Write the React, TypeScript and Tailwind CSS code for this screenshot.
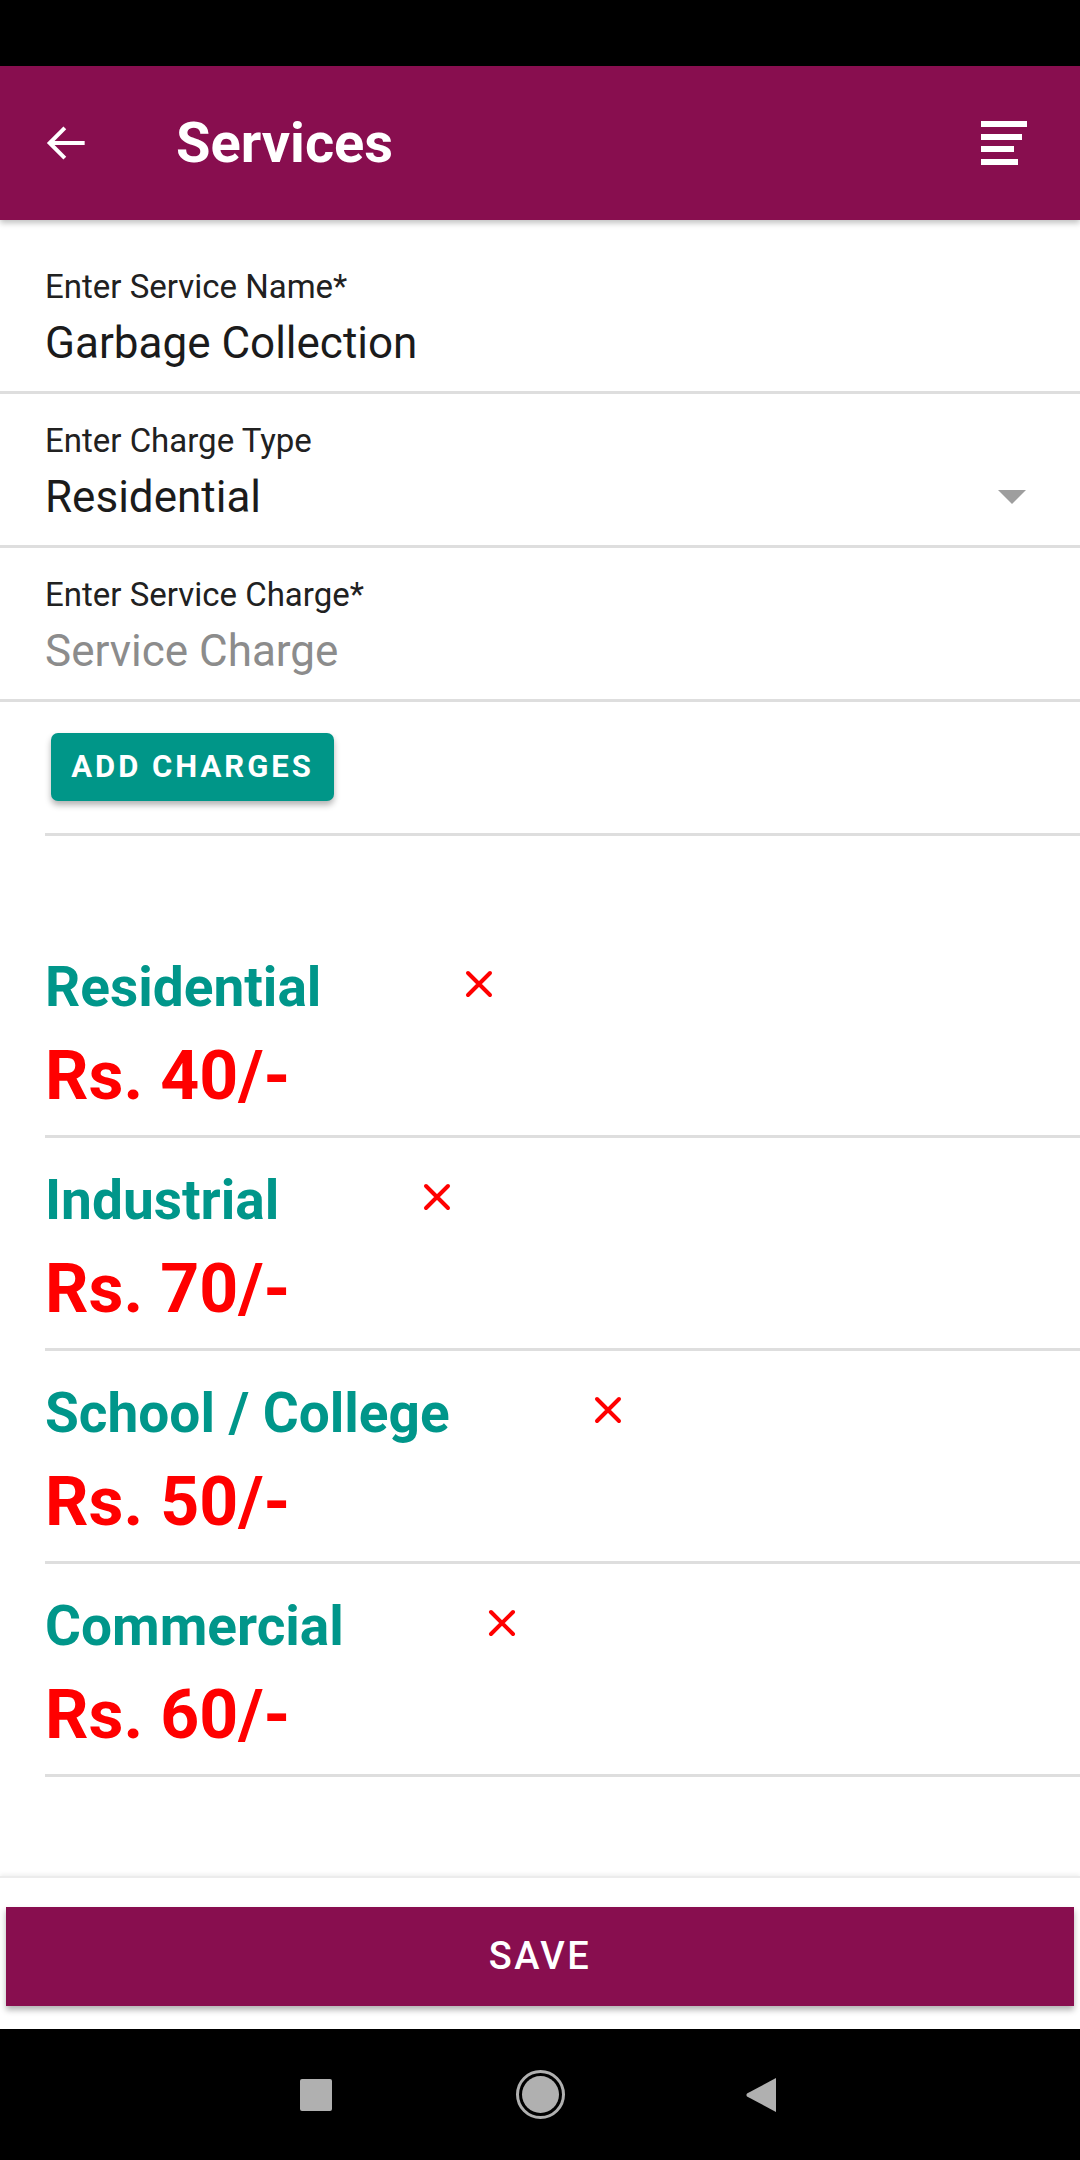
import React from "react"

const charges = [
  { type: "Residential", amount: 40 },
  { type: "Industrial", amount: 70 },
  { type: "School / College", amount: 50 },
  { type: "Commercial", amount: 60 },
]

function BackArrow() {
  return (
    <svg width="56" height="56" viewBox="0 0 24 24" fill="none" stroke="white" strokeWidth="1.7">
      <path d="M20 12H5" />
      <path d="M11.5 5.5L5 12l6.5 6.5" />
    </svg>
  )
}

function MenuLines() {
  return (
    <div className="flex flex-col gap-[6.5px]">
      <div className="h-[6px] w-[46px] bg-white" />
      <div className="h-[6px] w-[41px] bg-white" />
      <div className="h-[6px] w-[33px] bg-white" />
      <div className="h-[6px] w-[37px] bg-white" />
    </div>
  )
}

function RemoveMark() {
  return (
    <svg width="28" height="28" viewBox="0 0 28 28" stroke="#ff0000" strokeWidth="4" strokeLinecap="round">
      <path d="M3 3l22 22M25 3L3 25" />
    </svg>
  )
}

function Field({ label, value, placeholder, select, first }: { label: string; value?: string; placeholder?: string; select?: boolean; first?: boolean }) {
  return (
    <div className={`border-b-[3px] border-[#dedede] pl-[45px] pr-[54px] pb-[20px] ${first ? "pt-[48px]" : "pt-[28px]"}`}>
      <div className="text-[33px] leading-[38px] text-[#212121]">{label}</div>
      <div className="mt-[9px] flex items-center justify-between">
        {value ? (
          <span className="text-[44px] leading-[56px] text-[#1b1b1b]">{value}</span>
        ) : (
          <span className="text-[44px] leading-[56px] text-[#8c8c8c]">{placeholder}</span>
        )}
        {select && (
          <svg width="28" height="14" viewBox="0 0 28 14">
            <path d="M0 0h28L14 14z" fill="#9e9e9e" />
          </svg>
        )}
      </div>
    </div>
  )
}

export default function App() {
  return (
    <div className="flex h-[2160px] w-[1080px] flex-col bg-white" style={{ fontFamily: "Roboto, 'Noto Sans', sans-serif" }}>
      {/* status bar */}
      <div className="h-[66px] bg-black" />

      {/* toolbar */}
      <div className="relative z-10 flex h-[154px] items-center bg-[#880e4f] shadow-[0_3px_6px_rgba(0,0,0,0.25)]">
        <div className="ml-[38px] flex h-[56px] w-[56px] items-center">
          <BackArrow />
        </div>
        <div className="ml-[82px] text-[56px] font-bold leading-none text-white">Services</div>
        <div className="ml-auto mr-[53px]">
          <MenuLines />
        </div>
      </div>

      {/* form */}
      <div className="flex-1">
        <Field first label="Enter Service Name*" value="Garbage Collection" />
        <Field select label="Enter Charge Type" value="Residential" />
        <Field label="Enter Service Charge*" placeholder="Service Charge" />

        <div className="ml-[45px] border-b-[3px] border-[#dedede] pt-[31px] pb-[32px]">
          <button className="ml-[6px] flex h-[68px] w-[283px] items-center justify-center rounded-[7px] bg-[#009688] text-[31px] font-bold tracking-[3px] text-white shadow-[0_4px_6px_rgba(0,0,0,0.3)]">
            ADD CHARGES
          </button>
        </div>

        <div className="mt-[89px]">
          {charges.map((c) => (
            <div key={c.type} className="ml-[45px] border-b-[3px] border-[#dedede] pt-[30px] pb-[19px]">
              <div className="flex h-[64px] items-center">
                <span className="text-[55px] font-bold leading-[64px] text-[#00968a]">{c.type}</span>
                <span className="ml-[144px] -mt-[6px] flex">
                  <RemoveMark />
                </span>
              </div>
              <div className="mt-[17px] text-[68px] font-bold leading-[80px] text-[#ff0000]">Rs. {c.amount}/-</div>
            </div>
          ))}
        </div>
      </div>

      {/* bottom bar */}
      <div className="h-[153px] border-t-[2px] border-[#ececec] bg-white px-[6px] pt-[29px] shadow-[0_-2px_4px_rgba(0,0,0,0.06)]">
        <button className="flex h-[99px] w-full items-center justify-center bg-[#880e4f] text-[38px] font-medium tracking-[2.5px] text-white shadow-[0_4px_6px_rgba(0,0,0,0.3)]">
          SAVE
        </button>
      </div>

      {/* navigation bar */}
      <div className="flex h-[131px] items-center bg-black">
        <div className="ml-[300px] h-[32px] w-[32px] rounded-[2px] bg-[#b0b0b0]" />
        <div className="ml-[184px] flex h-[49px] w-[49px] items-center justify-center rounded-full border-[3px] border-[#b0b0b0]">
          <div className="h-[37px] w-[37px] rounded-full bg-[#b0b0b0]" />
        </div>
        <svg className="ml-[180px]" width="32" height="36" viewBox="0 0 32 36">
          <path d="M31 1v34L2 19.5a2.5 2.5 0 010-3z" fill="#b0b0b0" />
        </svg>
      </div>
    </div>
  )
}
